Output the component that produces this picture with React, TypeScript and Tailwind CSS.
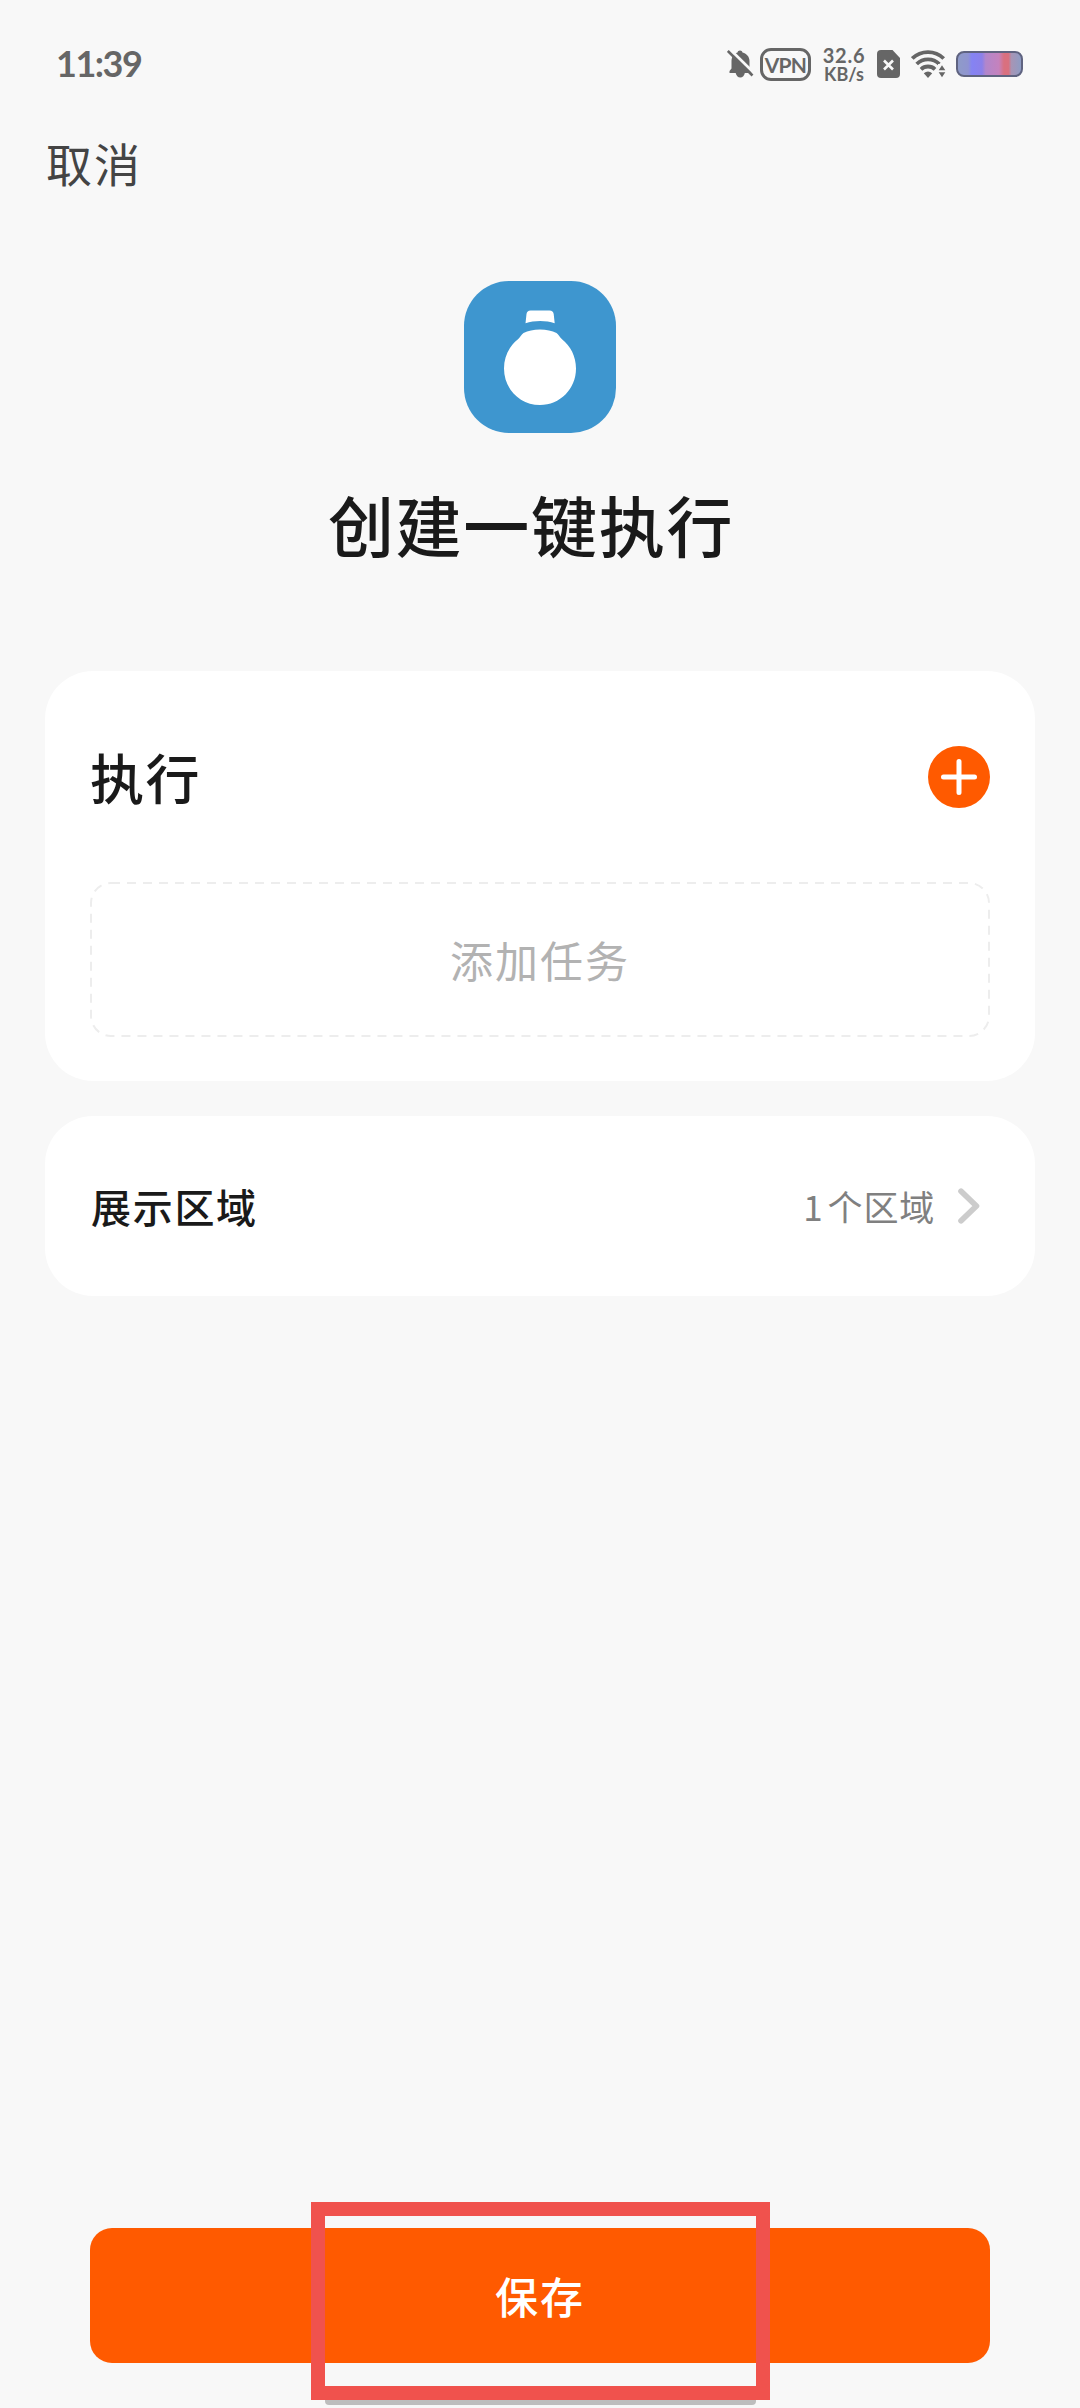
import React from "react";

function BellOff() {
  return (
    <svg width="27" height="30" viewBox="0 0 27 30" fill="none">
      <path
        d="M13 1.500c1.400 0 2.300.8 2.500 2 4.500 1.200 7 4.500 7 8.500v7.500l2 2.500v2H2.500v-2l2-2.500V12c0-4 2-7.300 6-8.500.2-1.200 1.100-2 2.500-2z"
        fill="#666"
      />
      <path d="M8.500 23.500h9.500c-.6 3-2.400 5-4.700 5s-4.200-2-4.800-5z" fill="#666" />
      <path d="M2 -.5L28 25" stroke="#f8f8f8" strokeWidth="3" />
      <path d="M.8 2L25.500 26.500" stroke="#666" strokeWidth="2.600" />
    </svg>
  );
}

function SimOff() {
  return (
    <svg width="23" height="28" viewBox="0 0 23 28" fill="none">
      <path d="M4 0h11.500L23 8v16a4 4 0 0 1-4 4H4a4 4 0 0 1-4-4V4a4 4 0 0 1 4-4z" fill="#666" />
      <path d="M7 10.500l9 9M16 10.500l-9 9" stroke="#f8f8f8" strokeWidth="2.600" />
    </svg>
  );
}

function Wifi() {
  return (
    <svg width="35" height="28" viewBox="0 0 35 28" fill="none">
      <g stroke="#666" strokeWidth="3.800">
        <path d="M1.300 8.500a22.500 22.500 0 0 1 31.400 0" />
        <path d="M5.700 14a16.200 16.200 0 0 1 22.600 0" />
        <path d="M10 19.300a10.200 10.200 0 0 1 14 0" />
      </g>
      <path d="M12.800 23.200a6.500 6.500 0 0 1 8.400 0L17 28z" fill="#666" />
      <path d="M27 14h8v14h-8z" fill="#f8f8f8" />
      <path d="M31 15.200l3.300 5h-6.600zM31 27.200l3.300-5h-6.600z" fill="#666" />
    </svg>
  );
}

function StatusBar() {
  return (
    <header className="flex h-[130px] items-start justify-between pl-14 pr-[57px] text-[#666] font-['Lato','Noto_Sans_CJK_SC',sans-serif]">
      <span className="mt-[41px] text-[36px] leading-[44px] font-bold tracking-[-1.500px]">11:39</span>
      <div className="mt-[46px] flex h-9 items-center">
        <BellOff />
        <span className="ml-[6px] flex h-[33px] w-[51px] items-center justify-center rounded-[11px] border-[3px] border-[#666] text-[21px] leading-none font-bold tracking-[-0.800px]">
          VPN
        </span>
        <span className="ml-[9px] flex w-[48px] flex-col items-center font-bold">
          <span className="text-[20px] leading-[20px] tracking-[0.800px]">32.6</span>
          <span className="text-[18px] leading-[19px]">KB/s</span>
        </span>
        <span className="ml-[9px]">
          <SimOff />
        </span>
        <span className="ml-[11px]">
          <Wifi />
        </span>
        <span className="ml-[10px] h-[26px] w-[67px] rounded-[8px] border-[2.500px] border-[#5f6380] bg-[linear-gradient(90deg,#8f9bc8_0%,#8f94d0_16%,#8583f3_22%,#8b80ea_38%,#b286cb_44%,#c582bd_65%,#d9707f_73%,#d9707f_80%,#a795b5_85%,#8e9cc4_100%)]" />
      </div>
    </header>
  );
}

function AppIcon() {
  return (
    <div className="h-[152px] w-[152px] overflow-hidden rounded-[45px] bg-[#3e96cf]">
      <svg width="152" height="152" viewBox="0 0 152 152" fill="#fff">
        <path d="M66.500 29.500h19c2.600 0 3.800 1.300 4.200 3.500l1 9.200c-8.600-3-20.400-3-29.200 0l1-9.200c.4-2.200 1.600-3.500 4-3.500z" />
        <path d="M76 48.500c6.500 0 12 1.200 16.500 3.600 2 1.200 3 4 5.500 6.200C106.500 65 112 75.500 112 87.500c0 20.500-16 36.500-36 36.500s-36-16-36-36.500C40 75.500 45.500 65 54 58.300c2.500-2.200 3.500-5 5.500-6.200C64 49.700 69.500 48.500 76 48.500z" />
      </svg>
    </div>
  );
}

export default function App() {
  return (
    <div className="relative flex h-[2408px] w-[1080px] flex-col overflow-hidden bg-[#f8f8f8] font-['Noto_Sans_CJK_SC',sans-serif]">
      <StatusBar />
      <button className="ml-[46px] h-[64px] self-start text-[46px] leading-[64px] tracking-[2px] text-[#444]">取消</button>

      <div className="mt-[87px] flex flex-col items-center">
        <AppIcon />
        <h1 className="mt-[45px] -ml-[18px] h-[90px] text-[66px] leading-[90px] font-medium tracking-[1.700px] text-[#1a1a1a]">
          创建一键执行
        </h1>
      </div>

      <section className="mx-[45px] mt-[103px] h-[410px] rounded-[48px] bg-white px-[45px] pt-[75px]">
        <div className="flex h-[62px] items-center justify-between">
          <h2 className="text-[54px] leading-[62px] font-medium tracking-[1.500px] text-[#1a1a1a]">执行</h2>
          <button className="flex h-[62px] w-[62px] items-center justify-center rounded-full bg-[#ff5a00]">
            <svg width="36" height="36" viewBox="0 0 36 36" stroke="#fff" strokeWidth="5" strokeLinecap="round">
              <path d="M18 2.500v31M2.500 18h31" />
            </svg>
          </button>
        </div>
        <div className="relative mt-[74px] flex h-[155px] items-center justify-center">
          <svg className="absolute inset-0" width="900" height="155" fill="none">
            <rect x="1" y="1" width="898" height="153" rx="20" stroke="#ededed" strokeWidth="2" strokeDasharray="9 7" />
          </svg>
          <span className="-mt-[2px] text-[43px] leading-[60px] tracking-[2px] text-[#b2b2b2]">添加任务</span>
        </div>
      </section>

      <section className="mx-[45px] mt-[35px] flex h-[180px] items-center justify-between rounded-[48px] bg-white pr-[54px] pl-[46px]">
        <span className="text-[40px] leading-[60px] font-medium tracking-[1.700px] text-[#1a1a1a]">展示区域</span>
        <span className="flex items-center">
          <span className="flex gap-[4px] text-[35px] leading-[60px] tracking-[0.800px] text-[#808080]">
            <span>1</span>
            <span>个区域</span>
          </span>
          <svg className="ml-[22px]" width="24" height="38" viewBox="0 0 22 36" fill="none" stroke="#ccc" strokeWidth="5.500" strokeLinecap="round" strokeLinejoin="round">
            <path d="M3.500 4L18 18L3.500 32" />
          </svg>
        </span>
      </section>

      <button className="mx-[90px] mt-auto mb-[45px] h-[135px] rounded-[22px] bg-[#ff5a00] text-[43px] font-medium tracking-[2px] text-white">
        保存
      </button>

      <div className="absolute top-[2398px] left-[325px] h-[7px] w-[431px] rounded-b-[4px] bg-[#bdbdbd]" />
      <div className="absolute top-[2202px] left-[311px] h-[198px] w-[459px] border-[14px] border-[#f0524d]" />
    </div>
  );
}
